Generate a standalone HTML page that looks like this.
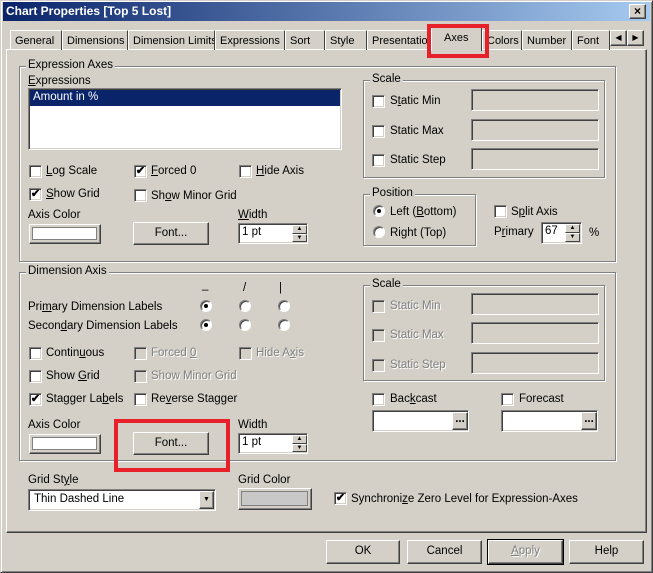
<!DOCTYPE html>
<html><head><style>
*{box-sizing:border-box}
body{margin:0;width:653px;height:573px;background:#d4d0c8;font-family:"Liberation Sans",Arial,sans-serif;font-size:11.5px;color:#000;position:relative;overflow:hidden}
.a{position:absolute;white-space:nowrap;margin-top:1px}
.win{position:absolute;left:0;top:0;width:653px;height:573px;border:1px solid;border-color:#d4d0c8 #404040 #404040 #d4d0c8;box-shadow:inset 1px 1px #fff,inset -1px -1px #808080}
.title{position:absolute;left:3px;top:2px;width:647px;height:19px;background:linear-gradient(to right,#0a246a,#a6caf0);color:#fff;font-weight:bold;font-size:12px;padding:2px 3px}
.btn{position:absolute;border:1px solid;border-color:#fff #404040 #404040 #fff;box-shadow:inset -1px -1px #808080;background:#d4d0c8;text-align:center}
.sunk{position:absolute;border:1px solid;border-color:#808080 #fff #fff #808080;box-shadow:inset 1px 1px #404040,inset -1px -1px #d4d0c8;background:#fff}
.dis{background:#d4d0c8}
.grp{position:absolute;border:1px solid #808080;box-shadow:inset 1px 1px #fff,1px 1px #fff}
.gl{position:absolute;background:#d4d0c8;padding:0 2px;white-space:nowrap;top:-8px;left:6px}
.cb{position:absolute;width:13px;height:13px;border:1px solid;border-color:#808080 #fff #fff #808080;box-shadow:inset 1px 1px #404040,inset -1px -1px #d4d0c8;background:#fff;font-size:11px;line-height:10px;text-align:center;font-weight:bold}
.cb.d{background:#d4d0c8}
.rb{position:absolute;width:12px;height:12px;border-radius:50%;background:#fff;border:1px solid;border-color:#808080 #fff #fff #808080;box-shadow:inset 1px 1px #404040}
.rb.on:after{content:"";position:absolute;left:3px;top:3px;width:4px;height:4px;border-radius:50%;background:#000}
.g{color:#808080;text-shadow:1px 1px #fff}
.tab{position:absolute;top:30px;height:20px;border:1px solid;border-bottom:none;border-color:#fff #404040 #404040 #fff;padding:4px 0 0 4px;font-size:11px;white-space:nowrap;overflow:hidden}
.red{position:absolute;border:4px solid #e8202a}
.spin{position:absolute;width:15px;border:1px solid;border-color:#fff #404040 #404040 #fff;background:#d4d0c8;font-size:6px;text-align:center;line-height:7px}
</style></head><body>
<div class="win"></div>
<div class="title">Chart Properties [Top 5 Lost]</div>
<div class="btn" style="left:629px;top:4px;width:17px;height:15px;font-size:12px;line-height:12px;font-weight:bold">×</div>

<div class="a" style="left:6px;top:49px;margin:0;width:641px;height:484px;border:1px solid;border-color:#fff #404040 #404040 #fff;box-shadow:inset -1px -1px #808080"></div>
<div class="tab" style="left:10px;width:52px">General</div>
<div class="tab" style="left:62px;width:66px">Dimensions</div>
<div class="tab" style="left:128px;width:87px">Dimension Limits</div>
<div class="tab" style="left:215px;width:70px">Expressions</div>
<div class="tab" style="left:285px;width:40px">Sort</div>
<div class="tab" style="left:325px;width:42px">Style</div>
<div class="tab" style="left:367px;width:66px">Presentation</div>
<div class="tab" style="left:482px;width:40px">Colors</div>
<div class="tab" style="left:522px;width:50px">Number</div>
<div class="tab" style="left:572px;width:38px">Font</div>
<div class="tab" style="left:431px;top:27px;height:24px;width:51px;background:#d4d0c8;padding-left:12px;z-index:2">Axes</div>
<div class="btn" style="left:610px;top:30px;width:17px;height:16px;font-size:8px;line-height:13px">◀</div>
<div class="btn" style="left:627px;top:30px;width:17px;height:16px;font-size:8px;line-height:13px">▶</div>
<div class="red" style="left:427px;top:24px;width:62px;height:34px;z-index:3"></div>

<div class="grp" style="left:19px;top:66px;width:597px;height:196px"><span class="gl">Expression Axes</span></div>
<div class="a" style="left:28px;top:74px"><u>E</u>xpressions</div>
<div class="sunk" style="left:28px;top:88px;width:314px;height:62px"></div>
<div class="a" style="left:30px;top:89px;width:310px;height:16px;background:#0a246a;color:#fff;padding:1px 3px">Amount in %</div>

<div class="cb" style="left:29px;top:165px"></div><div class="a" style="left:46px;top:164px"><u>L</u>og Scale</div>
<div class="cb" style="left:134px;top:165px">✔</div><div class="a" style="left:151px;top:164px"><u>F</u>orced 0</div>
<div class="cb" style="left:239px;top:165px"></div><div class="a" style="left:256px;top:164px"><u>H</u>ide Axis</div>
<div class="cb" style="left:29px;top:188px">✔</div><div class="a" style="left:46px;top:187px"><u>S</u>how Grid</div>
<div class="cb" style="left:134px;top:189px"></div><div class="a" style="left:151px;top:189px">Sh<u>o</u>w Minor Grid</div>
<div class="a" style="left:28px;top:208px">Axis Color</div>
<div class="btn" style="left:29px;top:224px;width:72px;height:20px"><div style="position:absolute;left:2px;top:2px;right:3px;bottom:3px;background:#fff;border:1px solid #808080"></div></div>
<div class="btn" style="left:133px;top:222px;width:76px;height:23px;line-height:20px">Font...</div>
<div class="a" style="left:238px;top:208px"><u>W</u>idth</div>
<div class="sunk" style="left:238px;top:223px;width:70px;height:21px;padding:2px 3px">1 pt</div>
<div class="spin" style="left:292px;top:225px;height:9px">▲</div><div class="spin" style="left:292px;top:234px;height:8px">▼</div>

<div class="grp" style="left:363px;top:80px;width:242px;height:98px"><span class="gl">Scale</span></div>
<div class="cb" style="left:372px;top:95px"></div><div class="a" style="left:390px;top:94px">S<u>t</u>atic Min</div>
<div class="cb" style="left:372px;top:125px"></div><div class="a" style="left:390px;top:124px">Static Max</div>
<div class="cb" style="left:372px;top:154px"></div><div class="a" style="left:390px;top:153px">Static Step</div>
<div class="sunk dis" style="left:471px;top:89px;width:128px;height:22px"></div>
<div class="sunk dis" style="left:471px;top:119px;width:128px;height:22px"></div>
<div class="sunk dis" style="left:471px;top:148px;width:128px;height:22px"></div>

<div class="grp" style="left:363px;top:194px;width:113px;height:52px"><span class="gl">Position</span></div>
<div class="rb on" style="left:373px;top:205px"></div><div class="a" style="left:390px;top:205px">Left (<u>B</u>ottom)</div>
<div class="rb" style="left:373px;top:226px"></div><div class="a" style="left:390px;top:226px">Right (Top)</div>
<div class="cb" style="left:494px;top:205px"></div><div class="a" style="left:511px;top:205px">S<u>p</u>lit Axis</div>
<div class="a" style="left:494px;top:225px">P<u>r</u>imary</div>
<div class="sunk" style="left:541px;top:222px;width:41px;height:22px;padding:2px 3px">67</div>
<div class="spin" style="left:565px;top:224px;height:9px">▲</div><div class="spin" style="left:565px;top:233px;height:9px">▼</div>
<div class="a" style="left:589px;top:226px">%</div>

<div class="grp" style="left:19px;top:272px;width:597px;height:189px"><span class="gl">Dimension Axis</span></div>
<div class="a" style="left:202px;top:278px">_</div>
<div class="a" style="left:243px;top:281px">/</div>
<div class="a" style="left:279px;top:281px">|</div>
<div class="a" style="left:28px;top:300px">Pri<u>m</u>ary Dimension Labels</div>
<div class="a" style="left:28px;top:319px">Secon<u>d</u>ary Dimension Labels</div>
<div class="rb on" style="left:200px;top:300px"></div><div class="rb" style="left:239px;top:300px"></div><div class="rb" style="left:278px;top:300px"></div>
<div class="rb on" style="left:200px;top:319px"></div><div class="rb" style="left:239px;top:319px"></div><div class="rb" style="left:278px;top:319px"></div>

<div class="cb" style="left:29px;top:347px"></div><div class="a" style="left:46px;top:346px">Contin<u>u</u>ous</div>
<div class="cb d" style="left:134px;top:347px"></div><div class="a g" style="left:151px;top:346px">Forced <u>0</u></div>
<div class="cb d" style="left:239px;top:347px"></div><div class="a g" style="left:256px;top:346px">Hide A<u>x</u>is</div>
<div class="cb" style="left:29px;top:370px"></div><div class="a" style="left:46px;top:369px">Show <u>G</u>rid</div>
<div class="cb d" style="left:134px;top:370px"></div><div class="a g" style="left:151px;top:369px">Show Minor Grid</div>
<div class="cb" style="left:29px;top:393px">✔</div><div class="a" style="left:46px;top:392px">Stagger La<u>b</u>els</div>
<div class="cb" style="left:134px;top:393px"></div><div class="a" style="left:151px;top:392px">Re<u>v</u>erse Stagger</div>
<div class="a" style="left:28px;top:418px">Axis Color</div>
<div class="btn" style="left:29px;top:434px;width:72px;height:20px"><div style="position:absolute;left:2px;top:2px;right:3px;bottom:3px;background:#fff;border:1px solid #808080"></div></div>
<div class="btn" style="left:133px;top:432px;width:76px;height:23px;line-height:20px">Font...</div>
<div class="a" style="left:238px;top:418px">Width</div>
<div class="sunk" style="left:238px;top:433px;width:70px;height:21px;padding:2px 3px">1 pt</div>
<div class="spin" style="left:292px;top:435px;height:9px">▲</div><div class="spin" style="left:292px;top:444px;height:8px">▼</div>
<div class="red" style="left:114px;top:419px;width:116px;height:53px"></div>

<div class="grp" style="left:363px;top:285px;width:242px;height:96px"><span class="gl">Scale</span></div>
<div class="cb d" style="left:372px;top:300px"></div><div class="a g" style="left:390px;top:299px">Static Min</div>
<div class="cb d" style="left:372px;top:329px"></div><div class="a g" style="left:390px;top:328px">Static Max</div>
<div class="cb d" style="left:372px;top:359px"></div><div class="a g" style="left:390px;top:358px">Static Step</div>
<div class="sunk dis" style="left:471px;top:293px;width:128px;height:22px"></div>
<div class="sunk dis" style="left:471px;top:322px;width:128px;height:22px"></div>
<div class="sunk dis" style="left:471px;top:352px;width:128px;height:22px"></div>

<div class="cb" style="left:372px;top:393px"></div><div class="a" style="left:390px;top:392px">Bac<u>k</u>cast</div>
<div class="cb" style="left:501px;top:393px"></div><div class="a" style="left:519px;top:392px">Forecast</div>
<div class="sunk" style="left:372px;top:410px;width:97px;height:22px"></div>
<div class="btn" style="left:452px;top:412px;width:16px;height:18px;font-weight:bold;line-height:12px">...</div>
<div class="sunk" style="left:501px;top:410px;width:97px;height:22px"></div>
<div class="btn" style="left:581px;top:412px;width:16px;height:18px;font-weight:bold;line-height:12px">...</div>

<div class="a" style="left:28px;top:473px">Grid St<u>y</u>le</div>
<div class="sunk" style="left:28px;top:489px;width:188px;height:22px;padding:3px 5px">Thin Dashed Line</div>
<div class="btn" style="left:199px;top:491px;width:15px;height:18px;font-size:7px;line-height:15px">▼</div>
<div class="a" style="left:238px;top:473px">Grid Color</div>
<div class="btn" style="left:238px;top:488px;width:74px;height:22px"><div style="position:absolute;left:2px;top:2px;right:3px;bottom:3px;background:#c8c8c8;border:1px solid #808080"></div></div>
<div class="cb" style="left:334px;top:492px">✔</div><div class="a" style="left:351px;top:492px">Synchroni<u>z</u>e Zero Level for Expression-Axes</div>

<div class="btn" style="left:326px;top:540px;width:74px;height:24px;line-height:21px">OK</div>
<div class="btn" style="left:407px;top:540px;width:75px;height:24px;line-height:21px">Cancel</div>
<div class="btn" style="left:488px;top:540px;width:75px;height:24px;line-height:21px;outline:1px solid #000"><span class="g"><u>A</u>pply</span></div>
<div class="btn" style="left:569px;top:540px;width:75px;height:24px;line-height:21px">Help</div>
</body></html>
